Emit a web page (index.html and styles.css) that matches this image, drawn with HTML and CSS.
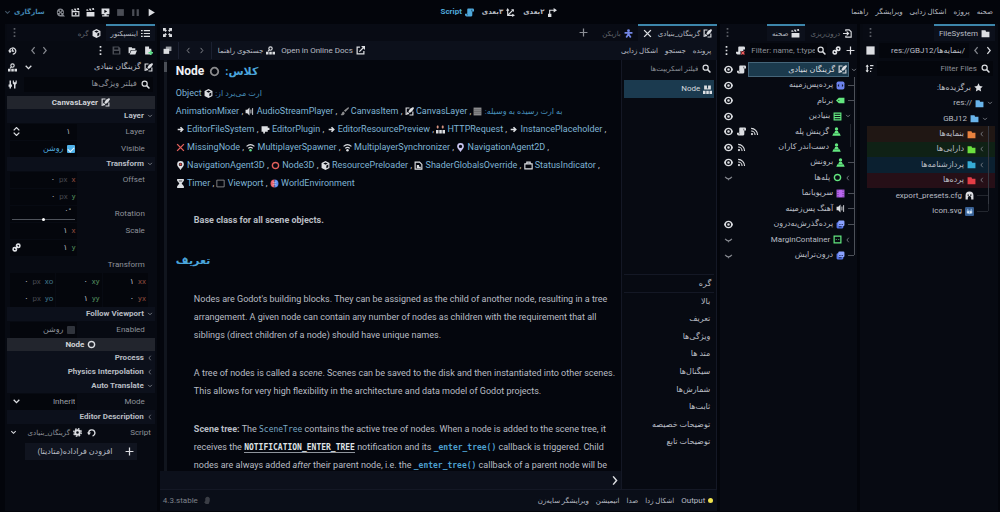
FILE: index.html
```html
<!DOCTYPE html>
<html lang="fa" dir="rtl">
<head>
<meta charset="utf-8">
<title>Script Editor</title>
<link rel="stylesheet" href="styles.css">
</head>
<body>
<svg class="sprite" aria-hidden="true">
  <symbol id="canvas" viewBox="0 0 16 16"><path d="M8 1.8H2v12.4M8 14.2h6V8" fill="none" stroke="currentColor" stroke-width="2"/><path d="M14.5 0 9 3 6 8l2.500 2.500L13 7l3-5zM5 9c-2 .5-1.500 3-3 4 2.500 1 5 .5 5.500-2z" fill="currentColor"/></symbol>
  <symbol id="script" viewBox="0 0 16 16"><path d="M5 1h8a2.500 2.500 0 0 1 3 2.500V6h-3v7a2 2 0 0 1-2 2H3a3 3 0 0 1-3-3v-2h4V3a2 2 0 0 1 1-2z" fill="currentColor"/><path d="M12 3v3M4 11v2" stroke="#060911" stroke-width="1"/></symbol>
  <symbol id="axis3" viewBox="0 0 16 16"><path d="M3 3v10h10M3 13 12 4" fill="none" stroke="currentColor" stroke-width="2"/><path d="M0 5l3-5 3 5zM11 10l5 3-5 3zM9 2h5v5z" fill="currentColor"/></symbol>
  <symbol id="axis2" viewBox="0 0 16 16"><path d="M3 13V4h10" fill="none" stroke="currentColor" stroke-width="2"/><path d="M10 0l6 4-6 4zM0 10h6v6H0z" fill="currentColor"/></symbol>
  <symbol id="chev-down" viewBox="0 0 16 16"><path d="m3 5 5 5 5-5" fill="none" stroke="currentColor" stroke-width="2.400"/></symbol>
  <symbol id="chev-left" viewBox="0 0 16 16"><path d="m10 2-5 6 5 6" fill="none" stroke="currentColor" stroke-width="2.200"/></symbol>
  <symbol id="chev-right" viewBox="0 0 16 16"><path d="m6 2 5 6-5 6" fill="none" stroke="currentColor" stroke-width="2.200"/></symbol>
  <symbol id="movie" viewBox="0 0 16 16"><path fill-rule="evenodd" d="M8 1a6.500 6.500 0 0 1 5 10.500l3 3.500H9A7 7 0 1 1 8 1zm0 2a1.500 1.500 0 1 0 0 3 1.500 1.500 0 0 0 0-3zM4.500 6a1.500 1.500 0 1 0 0 3 1.500 1.500 0 0 0 0-3zm7 0a1.500 1.500 0 1 0 0 3 1.500 1.500 0 0 0 0-3zM8 9.500a1.500 1.500 0 1 0 0 3 1.500 1.500 0 0 0 0-3z" fill="currentColor"/></symbol>
  <symbol id="clap-open" viewBox="0 0 16 16"><path d="M2 6.500V14h12V6.500z" fill="none" stroke="currentColor" stroke-width="2"/><path d="m0 3 3-1 2 3H1zM5 1.500 8 1l2 3.500L7 5zM10 .8l4-.8.700 3-2.700.500zM7 8l4 2.500L7 13z" fill="currentColor"/></symbol>
  <symbol id="clap" viewBox="0 0 16 16"><path d="M1 7h14v8H1zM0 3l3-1 2 3H1zM5 1.500 8 1l2 3.500L7 5zM10 .8l4-.8.700 3-2.700.500z" fill="currentColor"/></symbol>
  <symbol id="remote" viewBox="0 0 16 16"><path fill-rule="evenodd" d="M1 1h14v10h-5v2h4v2H2v-2h4v-2H1zm5 2v6l5-3z" fill="currentColor"/></symbol>
  <symbol id="stop" viewBox="0 0 16 16"><path d="M2 2h12v12H2z" fill="currentColor"/></symbol>
  <symbol id="pause" viewBox="0 0 16 16"><path d="M2 2h4v12H2zM10 2h4v12h-4z" fill="currentColor"/></symbol>
  <symbol id="play" viewBox="0 0 16 16"><path d="M3 1.500v13L14 8z" fill="currentColor"/></symbol>
  <symbol id="folder" viewBox="0 0 16 16"><path d="M1 2h7l1 3h6v9.500H1z" fill="currentColor"/></symbol>
  <symbol id="dots" viewBox="0 0 16 16"><path d="M6.500 0h3v3h-3zM6.500 6.500h3v3h-3zM6.500 13h3v3h-3z" fill="currentColor"/></symbol>
  <symbol id="search" viewBox="0 0 16 16"><circle cx="6.500" cy="6.500" r="4.500" fill="none" stroke="currentColor" stroke-width="2.200"/><path d="m10 10 5 5" stroke="currentColor" stroke-width="2.600"/></symbol>
  <symbol id="sort" viewBox="0 0 16 16"><path d="M4 2v12M9 3h6M9 8h4M9 13h2" stroke="currentColor" stroke-width="2.200"/><path d="M1 5l3-4 3 4zM1 11l3 4 3-4z" fill="currentColor"/></symbol>
  <symbol id="star" viewBox="0 0 16 16"><path d="m8 .5 2.300 4.900 5.200.700-3.800 3.700 1 5.400L8 12.500l-4.700 2.700 1-5.400L.5 6.100l5.200-.7z" fill="currentColor"/></symbol>
  <symbol id="home" viewBox="0 0 16 16"><path fill-rule="evenodd" d="M8 1a7 7 0 0 1 7 7v7h-4v-3a3 3 0 0 0-6 0v3H1V8a7 7 0 0 1 7-7zM4.500 6v2.500H7V6zM9 6v2.500h2.500V6z" fill="currentColor"/></symbol>
  <symbol id="godot" viewBox="0 0 16 16"><rect width="16" height="16" rx="2" fill="#375f93"/><path d="M3 6h10v5q-5 4-10 0zM4 3h2v3H4zM10 3h2v3h-2z" fill="#8fb6df"/><circle cx="5.500" cy="9" r="1.500" fill="#fff"/><circle cx="10.500" cy="9" r="1.500" fill="#fff"/></symbol>
  <symbol id="import" viewBox="0 0 16 16"><path d="M5 4V1.500h6L14.500 5v9.500H5V12M0 8h9M6.500 4.500 10 8l-3.500 3.500" fill="none" stroke="currentColor" stroke-width="2"/></symbol>
  <symbol id="plus" viewBox="0 0 16 16"><path d="M8 1v14M1 8h14" stroke="currentColor" stroke-width="2.200"/></symbol>
  <symbol id="link" viewBox="0 0 16 16"><g fill="none" stroke="currentColor" stroke-width="2.800"><rect x="8" y="2" width="6" height="6" rx="2.500"/><rect x="2" y="8" width="6" height="6" rx="2.500"/><path d="m5.500 10.500 5-5"/></g></symbol>
  <symbol id="script-x" viewBox="0 0 16 16"><path d="M5 1h8a2.500 2.500 0 0 1 3 2.500V6h-3v3H8v6H3a3 3 0 0 1-3-3v-2h4V3a2 2 0 0 1 1-2z" fill="currentColor"/><path d="m9.500 9.500 5.500 5.500m0-5.500L9.500 15" stroke="#f25c5c" stroke-width="2.200"/></symbol>
  <symbol id="eye" viewBox="0 0 16 16"><path fill-rule="evenodd" d="M8 1.500c4 0 7 2.500 8 6.500-1 4-4 6.500-8 6.500S1 12 0 8c1-4 4-6.500 8-6.500zm0 2a4.500 4.500 0 1 0 0 9 4.500 4.500 0 0 0 0-9z" fill="currentColor"/><circle cx="8" cy="8" r="2.200" fill="currentColor"/></symbol>
  <symbol id="shut" viewBox="0 0 16 16"><path d="M2 7q6 7 12 0M8 10v3" fill="none" stroke="currentColor" stroke-width="2.200"/></symbol>
  <symbol id="signal" viewBox="0 0 16 16"><circle cx="3.500" cy="12.500" r="2" fill="currentColor"/><path d="M2 2.500A11.500 11.500 0 0 1 13.500 14M2 7a7 7 0 0 1 7 7" fill="none" stroke="currentColor" stroke-width="2"/></symbol>
  <symbol id="parallax" viewBox="0 0 16 16"><rect x="1" y="1" width="14" height="14" rx="3" fill="#6d83ee"/><path d="M5.500 5 3 8l2.500 3M10.500 5 13 8l-2.500 3" fill="#161b33"/></symbol>
  <symbol id="player" viewBox="0 0 16 16"><rect x="1" y="4" width="12" height="11" rx="2" fill="#5876e8"/><rect x="4" y="1" width="11" height="10" rx="2" fill="#8ba2ff"/><path d="M6 8h2m2 0h2M5 12h5" stroke="#1c2550" stroke-width="1.800"/></symbol>
  <symbol id="tag" viewBox="0 0 16 16"><path d="M5 3h10v10H5L0 8z" fill="currentColor"/><circle cx="5" cy="8" r="1" fill="#0a2a12"/></symbol>
  <symbol id="vbox" viewBox="0 0 16 16"><path d="M2 2h12v12H2zM2 6h12M2 10h12" fill="none" stroke="currentColor" stroke-width="2"/></symbol>
  <symbol id="pawn" viewBox="0 0 16 16"><circle cx="8" cy="3.500" r="3" fill="currentColor"/><path d="M5.500 7h5l1.500 3.500H4zM2.500 11h11l2 4.500H.5z" fill="currentColor"/></symbol>
  <symbol id="ring" viewBox="0 0 16 16"><circle cx="8" cy="8" r="5.500" fill="none" stroke="currentColor" stroke-width="2.600"/></symbol>
  <symbol id="film" viewBox="0 0 16 16"><path d="M1 1h14v14H1z" fill="currentColor"/><path d="M3.500 1v14M12.500 1v14" stroke="#3a1650" stroke-width="1.200" stroke-dasharray="2 2"/></symbol>
  <symbol id="speaker" viewBox="0 0 16 16"><path d="M8 1v14l-4-4H1V5h3z" fill="currentColor"/><path d="M10.500 4.500v7M13.500 2v12" stroke="currentColor" stroke-width="1.600"/></symbol>
  <symbol id="margin" viewBox="0 0 16 16"><path d="M2 2h12v12H2z" fill="none" stroke="currentColor" stroke-width="2.200"/><path d="M5 8h1.500m3 0H11" stroke="currentColor" stroke-width="1.600"/></symbol>
  <symbol id="body" viewBox="0 0 16 16"><circle cx="8" cy="3" r="2.500" fill="currentColor"/><path d="M1 7h14M8 6v4m0-1-4 6m4-6 4 6" fill="none" stroke="currentColor" stroke-width="3"/></symbol>
  <symbol id="close" viewBox="0 0 16 16"><path d="m2 2 12 12M14 2 2 14" stroke="currentColor" stroke-width="2.400"/></symbol>
  <symbol id="docs" viewBox="0 0 16 16"><circle cx="8" cy="4.500" r="3" fill="none" stroke="currentColor" stroke-width="2"/><path d="M6 7 3.500 9.500" stroke="currentColor" stroke-width="2"/><path d="M0 10h4.500v5H0zM5.800 10h4.500v5H5.800zM11.500 10H16v5h-4.500z" fill="currentColor"/></symbol>
  <symbol id="classdoc" viewBox="0 0 16 16"><path d="M2 1h5v5h2V1h5v7H2zM0 10h4.500v6H0zM5.800 10h4.500v6H5.800zM11.500 10H16v6h-4.500z" fill="currentColor"/></symbol>
  <symbol id="external" viewBox="0 0 16 16"><path d="M7 2H2v12h12V9M6 10l7-7" fill="none" stroke="currentColor" stroke-width="2.200"/><path d="M9 0h7v7z" fill="currentColor"/></symbol>
  <symbol id="windows" viewBox="0 0 16 16"><path d="M5 1h10v8H5z" fill="#9a9da3"/><path d="M1 5h10v9H1z" fill="currentColor"/></symbol>
  <symbol id="expand" viewBox="0 0 16 16"><path d="M0 0h6L4.300 1.700 7 4.500 4.500 7 1.700 4.300 0 6zM16 0v6l-1.700-1.700L11.500 7 9 4.500l2.700-2.800L10 0zM0 16v-6l1.700 1.700L4.500 9 7 11.500l-2.700 2.800L6 16zM16 16h-6l1.700-1.700L9 11.500 11.500 9l2.800 2.700L16 10z" fill="currentColor"/></symbol>
  <symbol id="cube" viewBox="0 0 16 16"><path fill-rule="evenodd" d="m8 0 7 3.500v9L8 16l-7-3.500v-9zm0 2.500L4 4.500l4 2 4-2zM9.500 8v5l3.500-2V6z" fill="currentColor"/></symbol>
  <symbol id="list" viewBox="0 0 16 16"><path d="M0 3h3M0 8h3M0 13h3M5 3h11M5 8h11M5 13h11" stroke="currentColor" stroke-width="2.200"/></symbol>
  <symbol id="history" viewBox="0 0 16 16"><path d="M3 10a5.500 5.500 0 1 1 5.500 4.500M8 5v4h3" fill="none" stroke="currentColor" stroke-width="2.200"/><path d="M0 8h7l-3.500 5z" fill="currentColor"/></symbol>
  <symbol id="revert" viewBox="0 0 16 16"><path d="M3 9a5.500 5.500 0 1 1 7 5.200" fill="none" stroke="currentColor" stroke-width="2.400"/><path d="M0 8h7l-3.500 5z" fill="currentColor"/></symbol>
  <symbol id="save" viewBox="0 0 16 16"><path fill-rule="evenodd" d="M1 1h11l3 3v11H1zm3 1.500V6h7V2.500zM3.500 9v4.500h9V9z" fill="currentColor"/></symbol>
  <symbol id="load" viewBox="0 0 16 16"><path d="M1 2h6v2h6v3H5l-2 6H1zM6 8h10l-3 7H3z" fill="currentColor"/></symbol>
  <symbol id="newfile" viewBox="0 0 16 16"><path d="M2 1h7v4h4v10H2z" fill="currentColor"/><path d="M12 8v8M8 12h8" stroke="#5fe08a" stroke-width="2.600"/></symbol>
  <symbol id="tools" viewBox="0 0 16 16"><path d="M4 1v14M12 6v9" stroke="currentColor" stroke-width="2.600"/><path d="M1 8h6v4H1zM8.500 1h2v3h3V1h2v5l-2 2h-3l-2-2z" fill="currentColor"/></symbol>
  <symbol id="spin" viewBox="0 0 16 16"><path d="m3 6 5-5 5 5M3 10l5 5 5-5" fill="none" stroke="currentColor" stroke-width="2.200"/></symbol>
  <symbol id="gear" viewBox="0 0 16 16"><circle cx="8" cy="8" r="4" fill="none" stroke="currentColor" stroke-width="3.400"/><circle cx="8" cy="8" r="6.700" fill="none" stroke="currentColor" stroke-width="2.400" stroke-dasharray="2.900 2.360"/></symbol>
  <symbol id="brush" viewBox="0 0 16 16"><path d="M15 0 7 6l2.500 3L16 2zM6 8c-3 1-2 4-5 6 3 1.500 7 .5 7.500-3.500z" fill="currentColor"/></symbol>
  <symbol id="notify" viewBox="0 0 16 16"><path d="M4 4q4-5 8 0v5l-2 5H5l-3-3 2-2z" fill="currentColor"/></symbol>
  <symbol id="arrow" viewBox="0 0 16 16"><path d="M3 8h8M8 4l4 4-4 4" fill="none" stroke="currentColor" stroke-width="2.800"/></symbol>
  <symbol id="plugin" viewBox="0 0 16 16"><path d="M1 2h11v3h3v4h-3v3H7v3H4v-3H1z" fill="currentColor"/></symbol>
  <symbol id="http" viewBox="0 0 16 16"><path d="M3 1v5M1 3.500h4M12 1v5M10 3.500h4" stroke="#e8a08a" stroke-width="2"/><path d="M0 9h4.500v6H0zM5.800 9h4.500v6H5.800zM11.500 9H16v6h-4.500z" fill="currentColor"/></symbol>
  <symbol id="wifi" viewBox="0 0 16 16"><path d="M1 6q7-6 14 0M4 9.500q4-3.500 8 0" fill="none" stroke="currentColor" stroke-width="2.200"/><circle cx="8" cy="13" r="2.200" fill="var(--dot, currentColor)"/></symbol>
  <symbol id="pin" viewBox="0 0 16 16"><path fill-rule="evenodd" d="M8 0a6 6 0 0 1 6 6c0 3-3 5-6 10C5 11 2 9 2 6a6 6 0 0 1 6-6zm0 3a3 3 0 1 0 0 6 3 3 0 0 0 0-6z" fill="currentColor"/><circle cx="8" cy="6" r="2" fill="var(--dot, none)"/></symbol>
  <symbol id="shader" viewBox="0 0 16 16"><path d="M2 2h8l4 4v8.500H2z" fill="none" stroke="currentColor" stroke-width="2"/><path d="M5 7h4v3h3v3H5z" fill="currentColor"/></symbol>
  <symbol id="status" viewBox="0 0 16 16"><path d="M1.500 5h13v9h-13zM5 4V2h6v2" fill="none" stroke="currentColor" stroke-width="2"/></symbol>
  <symbol id="timer" viewBox="0 0 16 16"><path d="M2 0h12v3l-4 5 4 5v3H2v-3l4-5-4-5z" fill="currentColor"/><path d="M5 3.500h6" stroke="#060911" stroke-width="1.200"/></symbol>
  <symbol id="frame" viewBox="0 0 16 16"><path d="M1.500 2h13v12h-13z" fill="none" stroke="currentColor" stroke-width="1.600"/></symbol>
  <symbol id="world" viewBox="0 0 16 16"><path d="M8 1a7 7 0 0 0 0 14z" fill="#e8606a"/><path d="M8 1a7 7 0 0 1 0 14z" fill="#5a8cf0"/><path d="M4 5q4 3 8 0M4 11q4-3 8 0" fill="none" stroke="#e8ddea" stroke-width="1"/></symbol>
  <symbol id="grid" viewBox="0 0 16 16"><path d="M1 1h14v14H1z" fill="currentColor"/><path d="M1 5h14M1 8h14M1 11h14" stroke="#444" stroke-width="0.800"/></symbol>
</svg>

<header class="menubar">
  <nav class="menus">
    <button>صحنه</button><button>پروژه</button><button>اشکال زدایی</button><button>ویرایشگر</button><button>راهنما</button>
  </nav>
  <nav class="screens">
    <button><svg class="ic"><use href="#axis2"/></svg>۲بعدی</button>
    <button><svg class="ic"><use href="#axis3"/></svg>۳بعدی</button>
    <button class="on"><svg class="ic"><use href="#script"/></svg>Script</button>
  </nav>
  <div class="run">
    <button aria-label="Play"><svg class="ic"><use href="#play"/></svg></button>
    <button aria-label="Pause" class="off"><svg class="ic"><use href="#pause"/></svg></button>
    <button aria-label="Stop" class="off"><svg class="ic"><use href="#stop"/></svg></button>
    <button aria-label="Remote"><svg class="ic"><use href="#remote"/></svg></button>
    <button aria-label="Play scene"><svg class="ic"><use href="#clap"/></svg></button>
    <button aria-label="Play custom scene"><svg class="ic"><use href="#clap-open"/></svg></button>
    <button aria-label="Movie mode" class="half"><svg class="ic"><use href="#movie"/></svg></button>
    <button class="renderer">سازگاری<svg class="ic sm"><use href="#chev-down"/></svg></button>
  </div>
</header>

<main class="workspace">
  <section class="dock files">
    <div class="tabs"><button class="tab on latin"><svg class="ic"><use href="#folder"/></svg>FileSystem</button><button class="more" aria-label="Menu"><svg class="ic"><use href="#dots"/></svg></button></div>
    <div class="bar">
      <button aria-label="Forward"><svg class="ic"><use href="#chev-right"/></svg></button>
      <button aria-label="Back" class="half"><svg class="ic"><use href="#chev-left"/></svg></button>
      <input class="path" dir="ltr" aria-label="Path" value="res://GBJ12/بنمایه‌ها/">
      <button aria-label="Split mode"><svg class="ic lg"><use href="#stop"/></svg></button>
    </div>
    <div class="bar slim">
      <label class="field"><svg class="ic"><use href="#search"/></svg><input placeholder="Filter Files" aria-label="Filter Files"></label>
      <button aria-label="Sort"><svg class="ic"><use href="#sort"/></svg></button>
    </div>
    <ul class="tree filetree">
      <li class="row"><i class="pad"></i><i class="pad"></i><svg class="ic"><use href="#star"/></svg><span>برگزیده‌ها:</span></li>
      <li class="row"><svg class="ic tiny"><use href="#chev-down"/></svg><svg class="ic blue"><use href="#folder"/></svg><span dir="ltr">res://</span></li>
      <li class="row"><i class="pad"></i><svg class="ic tiny"><use href="#chev-down"/></svg><svg class="ic blue"><use href="#folder"/></svg><span>GBJ12</span></li>
      <li class="row tint orange"><i class="rail pass"></i><svg class="ic tiny"><use href="#chev-left"/></svg><svg class="ic"><use href="#folder"/></svg><span>بنمایه‌ها</span></li>
      <li class="row tint green"><i class="rail pass"></i><svg class="ic tiny"><use href="#chev-left"/></svg><svg class="ic"><use href="#folder"/></svg><span>دارایی‌ها</span></li>
      <li class="row tint cyan"><i class="rail pass"></i><svg class="ic tiny"><use href="#chev-left"/></svg><svg class="ic"><use href="#folder"/></svg><span>پردازشنامه‌ها</span></li>
      <li class="row tint red"><i class="rail pass"></i><svg class="ic tiny"><use href="#chev-left"/></svg><svg class="ic"><use href="#folder"/></svg><span>پرده‌ها</span></li>
      <li class="row"><i class="rail wide"></i><svg class="ic"><use href="#home"/></svg><span>export_presets.cfg</span></li>
      <li class="row"><i class="rail wide last"></i><svg class="ic"><use href="#godot"/></svg><span>icon.svg</span></li>
    </ul>
  </section>

  <section class="dock scene">
    <div class="tabs"><button class="tab"><svg class="ic"><use href="#import"/></svg>درون‌ریزی</button><button class="tab on"><svg class="ic"><use href="#clap"/></svg>صحنه</button><button class="more" aria-label="Menu"><svg class="ic"><use href="#dots"/></svg></button></div>
    <div class="bar">
      <button aria-label="Add node"><svg class="ic"><use href="#plus"/></svg></button>
      <button aria-label="Instance scene"><svg class="ic"><use href="#link"/></svg></button>
      <label class="field"><svg class="ic"><use href="#search"/></svg><input dir="ltr" placeholder="Filter: name, t:type" aria-label="Filter nodes"></label>
      <button aria-label="Detach script"><svg class="ic"><use href="#script-x"/></svg></button>
      <button aria-label="More"><svg class="ic"><use href="#dots"/></svg></button>
    </div>
    <ul class="tree scenetree">
      <li class="row"><svg class="ic tiny"><use href="#chev-down"/></svg><div class="picked"><svg class="ic"><use href="#canvas"/></svg><span>گزینگان بنیادی</span></div><div class="flags"><svg class="ic"><use href="#script"/></svg><svg class="ic"><use href="#eye"/></svg></div></li>
      <li class="row"><i class="rail"></i><svg class="ic"><use href="#parallax"/></svg><span>پرده‌پس‌زمینه</span><div class="flags"><svg class="ic"><use href="#eye"/></svg></div></li>
      <li class="row"><i class="rail"></i><svg class="ic lime"><use href="#tag"/></svg><span>برنام</span><div class="flags"><svg class="ic"><use href="#eye"/></svg></div></li>
      <li class="row"><i class="rail pass"></i><svg class="ic tiny"><use href="#chev-down"/></svg><svg class="ic lime"><use href="#vbox"/></svg><span>بنیادین</span><div class="flags"><svg class="ic"><use href="#eye"/></svg></div></li>
      <li class="row"><i class="rail pass"></i><i class="rail dim"></i><svg class="ic lime"><use href="#pawn"/></svg><span>گزینش پله</span><div class="flags"><svg class="ic"><use href="#signal"/></svg><svg class="ic"><use href="#script"/></svg><svg class="ic"><use href="#eye"/></svg></div></li>
      <li class="row"><i class="rail pass"></i><i class="rail dim last"></i><svg class="ic lime"><use href="#pawn"/></svg><span>دست‌اندر کاران</span><div class="flags"><svg class="ic"><use href="#signal"/></svg><svg class="ic"><use href="#eye"/></svg></div></li>
      <li class="row"><i class="rail"></i><svg class="ic lime"><use href="#pawn"/></svg><span>برونش</span><div class="flags"><svg class="ic"><use href="#signal"/></svg><svg class="ic"><use href="#eye"/></svg></div></li>
      <li class="row"><i class="rail pass"></i><svg class="ic tiny"><use href="#chev-left"/></svg><svg class="ic lime"><use href="#ring"/></svg><span>پله‌ها</span><div class="flags"><svg class="ic half"><use href="#shut"/></svg></div></li>
      <li class="row"><i class="rail"></i><svg class="ic purple"><use href="#film"/></svg><span>سرپویانما</span></li>
      <li class="row"><i class="rail"></i><svg class="ic"><use href="#speaker"/></svg><span>آهنگ پس‌زمینه</span></li>
      <li class="row"><i class="rail"></i><svg class="ic"><use href="#player"/></svg><span>پرده‌گذرش‌به‌درون</span><div class="flags"><svg class="ic"><use href="#eye"/></svg></div></li>
      <li class="row"><i class="rail pass"></i><svg class="ic tiny"><use href="#chev-left"/></svg><svg class="ic lime"><use href="#margin"/></svg><span>MarginContainer</span><div class="flags"><svg class="ic half"><use href="#shut"/></svg></div></li>
      <li class="row"><i class="rail last"></i><svg class="ic"><use href="#player"/></svg><span>درون‌ترایش</span><div class="flags"><svg class="ic half"><use href="#shut"/></svg></div></li>
    </ul>
  </section>

  <section class="editor">
    <div class="tabs">
      <button class="tab on"><svg class="ic"><use href="#canvas"/></svg>گزینگان_بنیادی<svg class="ic shut"><use href="#close"/></svg></button>
      <button class="tab"><svg class="ic body"><use href="#body"/></svg>بازیکن</button>
      <button class="add" aria-label="New tab"><svg class="ic"><use href="#plus"/></svg></button>
      <button class="more" aria-label="Distraction free"><svg class="ic"><use href="#expand"/></svg></button>
    </div>
    <div class="toolbar">
      <button>پرونده</button><button>جستجو</button><button>اشکال زدایی</button>
      <div class="tools">
        <button class="latin"><svg class="ic"><use href="#external"/></svg>Open in Online Docs</button>
        <button><svg class="ic"><use href="#docs"/></svg>جستجوی راهنما</button>
        <i class="sep"></i>
        <button aria-label="Next" class="half"><svg class="ic sm"><use href="#chev-right"/></svg></button>
        <button aria-label="Previous" class="half"><svg class="ic sm"><use href="#chev-left"/></svg></button>
        <i class="sep"></i>
        <button aria-label="Float window"><svg class="ic"><use href="#windows"/></svg></button>
      </div>
    </div>
    <div class="split">
      <aside class="scripts">
        <label class="field"><svg class="ic"><use href="#search"/></svg><input placeholder="فیلتر اسکریپت‌ها" aria-label="فیلتر اسکریپت‌ها"></label>
        <div class="openfiles"><button class="openfile"><svg class="ic"><use href="#classdoc"/></svg>Node</button></div>
        <h3 class="outline-title">گره</h3>
        <ul class="outline">
          <li>بالا</li><li>تعریف</li><li>ویژگی‌ها</li><li>متد ها</li><li>سیگنال‌ها</li><li>شمارش‌ها</li><li>ثابت‌ها</li><li>توضیحات خصیصه</li><li>توضیحات تابع</li>
        </ul>
      </aside>
      <div class="page">
        <article class="doc" dir="ltr">
          <div class="scroll"><i></i></div>
          <h1>Node <svg class="ic lg grey"><use href="#ring"/></svg> <bdi>کلاس:</bdi></h1>
          <p class="from"><a href="#o">Object</a> <svg class="ic"><use href="#cube"/></svg> <bdi>ارث می‌برد از:</bdi></p>
          <div class="heirs">
            <p><a href="#a">AnimationMixer</a> , <svg class="ic"><use href="#speaker"/></svg> <a href="#a">AudioStreamPlayer</a> , <svg class="ic grey"><use href="#brush"/></svg> <a href="#a">CanvasItem</a> , <svg class="ic"><use href="#canvas"/></svg> <a href="#a">CanvasLayer</a> , <svg class="ic grey"><use href="#grid"/></svg> <bdi>به ارث رسیده به وسیله:</bdi></p>
            <p><svg class="ic"><use href="#arrow"/></svg> <a href="#a">EditorFileSystem</a> , <svg class="ic"><use href="#plugin"/></svg> <a href="#a">EditorPlugin</a> , <svg class="ic"><use href="#arrow"/></svg> <a href="#a">EditorResourcePreview</a> , <svg class="ic"><use href="#http"/></svg> <a href="#a">HTTPRequest</a> , <svg class="ic"><use href="#arrow"/></svg> <a href="#a">InstancePlaceholder</a> ,</p>
            <p><svg class="ic rose"><use href="#close"/></svg> <a href="#a">MissingNode</a> , <svg class="ic greendot"><use href="#wifi"/></svg> <a href="#a">MultiplayerSpawner</a> , <svg class="ic"><use href="#wifi"/></svg> <a href="#a">MultiplayerSynchronizer</a> , <svg class="ic violet"><use href="#pin"/></svg> <a href="#a">NavigationAgent2D</a> ,</p>
            <p><svg class="ic reddot"><use href="#pin"/></svg> <a href="#a">NavigationAgent3D</a> , <svg class="ic rose"><use href="#ring"/></svg> <a href="#a">Node3D</a> , <svg class="ic"><use href="#cube"/></svg> <a href="#a">ResourcePreloader</a> , <svg class="ic"><use href="#shader"/></svg> <a href="#a">ShaderGlobalsOverride</a> , <svg class="ic"><use href="#status"/></svg> <a href="#a">StatusIndicator</a> ,</p>
            <p><svg class="ic"><use href="#timer"/></svg> <a href="#a">Timer</a> , <svg class="ic grey"><use href="#frame"/></svg> <a href="#a">Viewport</a> , <svg class="ic"><use href="#world"/></svg> <a href="#a">WorldEnvironment</a></p>
          </div>
          <p class="brief">Base class for all scene objects.</p>
          <h2><bdi>تعریف</bdi></h2>
          <div class="prose">
            <p>Nodes are Godot's building blocks. They can be assigned as the child of another node, resulting in a tree<br>arrangement. A given node can contain any number of nodes as children with the requirement that all<br>siblings (direct children of a node) should have unique names.</p>
            <p>A tree of nodes is called a <em>scene</em>. Scenes can be saved to the disk and then instantiated into other scenes.<br>This allows for very high flexibility in the architecture and data model of Godot projects.</p>
            <p><b>Scene tree:</b> The <code>SceneTree</code> contains the active tree of nodes. When a node is added to the scene tree, it<br>receives the <code class="const">NOTIFICATION_ENTER_TREE</code> notification and its <code class="fn">_enter_tree()</code> callback is triggered. Child<br>nodes are always added <em>after</em> their parent node, i.e. the <code class="fn">_enter_tree()</code> callback of a parent node will be</p>
          </div>
        </article>
        <div class="strip"><button aria-label="Toggle list"><svg class="ic lg"><use href="#chev-right"/></svg></button></div>
      </div>
    </div>
    <footer class="bottom">
      <button class="latin"><i class="dot"></i>Output</button><button>اشکال زدا</button><button>صدا</button><button>انیمیشن</button><button>ویرایشگر سایه‌زن</button>
      <div class="version latin"><svg class="ic"><use href="#notify"/></svg><span dir="ltr">4.3.stable</span></div>
    </footer>
  </section>

  <section class="dock inspector">
    <div class="tabs"><button class="tab on"><svg class="ic"><use href="#list"/></svg>اینسپکتور</button><button class="tab"><svg class="ic"><use href="#cube"/></svg>گره</button><button class="more" aria-label="Menu"><svg class="ic"><use href="#dots"/></svg></button></div>
    <div class="bar">
      <button aria-label="New resource"><svg class="ic"><use href="#newfile"/></svg></button>
      <button aria-label="Load resource"><svg class="ic"><use href="#load"/></svg></button>
      <button aria-label="Save resource" class="off"><svg class="ic"><use href="#save"/></svg></button>
      <button aria-label="Options"><svg class="ic"><use href="#dots"/></svg></button>
      <div class="nav">
        <button aria-label="Next" class="half"><svg class="ic"><use href="#chev-right"/></svg></button>
        <button aria-label="Previous" class="half"><svg class="ic"><use href="#chev-left"/></svg></button>
      </div>
      <button aria-label="History"><svg class="ic"><use href="#history"/></svg></button>
    </div>
    <div class="bar object">
      <button class="name"><svg class="ic"><use href="#canvas"/></svg>گزینگان بنیادی<svg class="ic end"><use href="#chev-down"/></svg></button>
      <button aria-label="Open documentation"><svg class="ic"><use href="#docs"/></svg></button>
    </div>
    <div class="bar">
      <label class="field"><svg class="ic"><use href="#search"/></svg><input placeholder="فیلتر ویژگی‌ها" aria-label="فیلتر ویژگی‌ها"></label>
      <button aria-label="Property tools"><svg class="ic"><use href="#tools"/></svg></button>
    </div>
    <div class="props">
      <h3 class="category"><svg class="ic"><use href="#canvas"/></svg>CanvasLayer</h3>
      <button class="group"><svg class="ic tiny"><use href="#chev-down"/></svg>Layer</button>
      <div class="prop"><label for="layer">Layer</label><div class="value"><input id="layer" class="num" value="۱"><svg class="ic"><use href="#spin"/></svg></div></div>
      <div class="prop"><span>Visible</span><label class="value check lit"><input type="checkbox" checked>روشن</label></div>
      <button class="group"><svg class="ic tiny"><use href="#chev-down"/></svg>Transform</button>
      <div class="prop"><span>Offset</span><label class="value"><b class="x">x</b><i>px</i><input value="۰"></label></div>
      <div class="prop"><span></span><label class="value"><b class="y">y</b><i>px</i><input value="۰"></label></div>
      <div class="prop"><label for="rot">Rotation</label><div class="value angle"><input id="rot" value="۰°"><input type="range" aria-label="Rotation slider" value="50"></div></div>
      <div class="prop"><span>Scale</span><label class="value"><b class="x">x</b><input value="۱"></label></div>
      <div class="prop"><span></span><label class="value"><b class="y">y</b><input value="۱"><svg class="ic"><use href="#link"/></svg></label></div>
      <div class="prop"><span>Transform</span></div>
      <div class="matrix"><label><b class="x">xx</b><input value="۱"></label><label><b class="y">xy</b><input value="۰"></label><label><b class="z">xo</b><i>px</i><input value="۰"></label></div>
      <div class="matrix"><label><b class="x">yx</b><input value="۰"></label><label><b class="y">yy</b><input value="۱"></label><label><b class="z">yo</b><i>px</i><input value="۰"></label></div>
      <button class="group"><svg class="ic tiny"><use href="#chev-down"/></svg>Follow Viewport</button>
      <div class="prop"><span>Enabled</span><label class="value check"><input type="checkbox">روشن</label></div>
      <h3 class="category"><svg class="ic"><use href="#ring"/></svg>Node</h3>
      <button class="group"><svg class="ic tiny"><use href="#chev-left"/></svg>Process</button>
      <button class="group"><svg class="ic tiny"><use href="#chev-left"/></svg>Physics Interpolation</button>
      <button class="group"><svg class="ic tiny"><use href="#chev-down"/></svg>Auto Translate</button>
      <div class="prop"><label for="mode">Mode</label><div class="value"><select id="mode"><option>Inherit</option></select><svg class="ic"><use href="#chev-down"/></svg></div></div>
      <button class="group"><svg class="ic tiny"><use href="#chev-left"/></svg>Editor Description</button>
      <div class="prop script"><span>Script</span><button aria-label="Revert"><svg class="ic"><use href="#revert"/></svg></button><button class="res"><svg class="ic"><use href="#gear"/></svg>گزینگان_بنیادی<svg class="ic sm end"><use href="#chev-down"/></svg></button></div>
      <button class="meta"><svg class="ic"><use href="#plus"/></svg><span>افزودن فراداده(متادیتا)</span></button>
    </div>
  </section>
</main>
</body>
</html>
```
FILE: styles.css
```css
:root {
  --ink: #b9bdc4;
  --panel: #070a12;
  --raised: #0c101b;
  --deep: #04060c;
  --accent: #4fa9dc;
  --line: #141825;
}
* { box-sizing: border-box; }
html, body { height: 100%; }
body {
  margin: 0;
  display: flex;
  flex-direction: column;
  overflow: hidden;
  background: #03050b;
  color: var(--ink);
  font: 8px/12px Roboto, "DejaVu Sans", sans-serif;
}
.sprite { position: absolute; width: 0; height: 0; }
h1, h2, h3, p, ul { margin: 0; padding: 0; }
ul { list-style: none; }
button, input, select { font: inherit; color: inherit; background: none; border: 0; padding: 0; margin: 0; min-width: 0; }
button { display: flex; align-items: center; gap: 3px; white-space: nowrap; }
input::placeholder { color: #8d9199; opacity: 1; }
i { font-style: normal; }
.ic { width: 9px; height: 9px; flex: none; color: #dcdee2; display: block; }
.ic.lg { width: 11px; height: 11px; }
.ic.sm { width: 7px; height: 7px; }
.ic.tiny { width: 6px; height: 6px; color: #80848c; }
.half .ic, .ic.half { color: #85888f; }
.off .ic { color: #4b4e56; }

/* compact chrome text */
.menubar, .tabs, .toolbar, .bottom { font-size: 7px; }
.latin { font-size: 8px; }

/* top bar */
.menubar { display: grid; grid-template-columns: 1fr auto 1fr; align-items: center; height: 24px; padding: 0 7px 0 4px; }
.menus { display: flex; gap: 7px; }
.screens { display: flex; gap: 8px; font-weight: 700; }
.screens .on { font-size: 8px; }
.screens .on, .screens .on .ic { color: var(--accent); }
.run { display: flex; justify-content: flex-end; gap: 6px; }
.run > :first-child { margin-left: 1px; }
.run .renderer { color: #4389b5; font-weight: 700; margin-right: 5px; }
.renderer .ic { color: #44586a; }

.workspace { flex: 1; min-height: 0; display: grid; grid-template-columns: 138fr 137fr 558fr 152fr; gap: 3px; padding: 0 2px 1px 5px; }
.dock, .editor { min-width: 0; min-height: 0; display: flex; flex-direction: column; background: var(--panel); }
.tabs { display: flex; height: 17px; flex: none; background: #080b14; }
.tab { padding: 0 5px; color: #63676f; border-top: 2px solid transparent; }
.tab.on { background: var(--raised); border-top-color: #3d86ab; color: var(--ink); }
.more { margin-right: auto; padding: 0 3px; }
.dock .more .ic { color: #5c5f67; }
.bar { display: flex; align-items: center; gap: 6px; height: 19px; padding: 0 4px; }
.field { flex: 1; min-width: 0; display: flex; align-items: center; gap: 4px; padding: 0 3px; height: 15px; background: var(--deep); }
.field input { flex: 1; width: 0; }
.field input[dir="ltr"] { text-align: right; }
.scene .bar { gap: 5px; padding: 0 2px; }
.scene .field { gap: 2px; padding: 0 1px; }

/* file system */
.files { padding: 0 3px; }
.files .bar { padding: 0 2px; gap: 3px; }
.files .slim { height: 17px; }
.path { flex: 1; width: 0; height: 15px; text-align: right; background: var(--deep); padding: 0 4px; }
.tree { display: grid; grid-auto-rows: 1fr; }
.filetree { height: 139px; margin-top: 3px; }
.scenetree { height: 201px; margin-top: 2px; }
.row { display: flex; align-items: center; gap: 3px; padding: 0 2px; white-space: nowrap; }
.scenetree .row { padding-right: 0; }
.pad { width: 2px; }
.blue { color: #69b4ea; }
.rail { align-self: stretch; width: 7px; margin-right: 2px; border-right: 1px solid #4c5058; background: linear-gradient(#4c5058, #4c5058) center / 100% 1px no-repeat; }
.rail.pass { width: 1px; background: none; }
.rail.dim { margin-right: 0; border-color: #23272f; background: none; }
.rail.wide { width: 12px; border-color: #23272f; background: linear-gradient(#23272f, #23272f) center / 100% 1px no-repeat; }
.filetree .rail { margin-right: 4px; border-color: #343841; }
.rail.last { border-image: linear-gradient(#4c5058 50%, transparent 50%) 1; }
.rail.dim.last, .rail.wide.last { border-image: linear-gradient(#23272f 50%, transparent 50%) 1; }
.tint { margin: 0 0 0 4px; }
.tint.orange { background: #201714; } .orange .ic + .ic { color: #e9833e; }
.tint.green { background: #0f2115; } .green .ic + .ic { color: #6be03f; }
.tint.cyan { background: #0b2030; } .cyan .ic + .ic { color: #36acd6; }
.tint.red { background: #260f17; } .red .ic + .ic { color: #e23d46; }

/* scene tree */
.picked { flex: 1; display: flex; align-items: center; gap: 3px; align-self: stretch; padding: 0 1px; background: #1b3a4d; border: 1px solid #456579; color: #d5d9de; }
.scenetree .row:first-child { gap: 2px; }
.flags { display: flex; gap: 4px; margin-right: auto; padding-left: 2px; }
.picked + .flags { margin-right: 0; }
.lime { color: #63e67f; }
.purple { color: #b966ee; }

/* editor */
.editor .tab .shut { margin-right: 3px; }
.body { color: #7387e6; }
.add { padding: 0 9px; }
.add .ic { color: #8a8d94; }
.toolbar { display: flex; align-items: center; gap: 7px; height: 19px; flex: none; padding: 0 6px 0 3px; background: var(--raised); }
.tools { display: flex; align-items: center; gap: 6px; margin-right: auto; }
.sep { width: 1px; height: 17px; background: #1b2030; }
.split { flex: 1; min-height: 0; display: grid; grid-template-columns: 96fr 462fr; }
.scripts { display: flex; flex-direction: column; min-height: 0; padding: 0 2px 2px; background: var(--panel); border-right: 1px solid var(--line); border-left: 1px solid var(--line); }
.scripts .field { flex: none; height: 17px; background: none; font-size: 7px; }
.openfiles { flex: 1; padding-top: 3px; }
.openfile { width: 100%; height: 18px; padding: 0 2px; background: #1b3a4f; color: #d5d9de; }
.outline-title { font-size: 8px; font-weight: 400; line-height: 17px; padding: 0 3px; border: solid var(--line); border-width: 1px 0; }
.outline { display: grid; grid-auto-rows: 1fr; height: 158px; margin-bottom: 36px; padding: 0 4px; align-items: center; }
.page { display: flex; flex-direction: column; min-width: 0; min-height: 0; }
.doc { position: relative; flex: 1; min-height: 0; overflow: hidden; padding: 2px 0 0 16px; background: #04060d; font-size: 9px; line-height: 18px; white-space: nowrap; }
.scroll { position: absolute; left: 4px; top: 0; bottom: 0; width: 3px; background: #11151e; }
.scroll i { display: block; width: 3px; height: 10px; margin-top: 2px; background: #4a4e56; }
.doc .ic { display: inline-block; vertical-align: -2px; }
.doc a { color: #7fb4d4; text-decoration: none; }
.doc bdi { color: #468fbb; font-size: 8px; line-height: 12px; }
.doc h1 { font-size: 12px; line-height: 18px; color: #f0f2f5; }
.doc h1 .ic { margin: 0 2px; }
.doc h1 bdi, .doc h2 bdi { color: #4aa5dc; font-size: 11px; }
.doc .grey { color: #8b8b8d; }
.from { margin-top: 4px; }
.doc .rose { color: #e2605c; }
.greendot { --dot: #5fe08a; }
.reddot { --dot: #e2504c; }
.violet { color: #c9c4f0; }
.brief { margin: 19px 0 0 18px; font-weight: 700; }
.doc h2 { margin-top: 21px; line-height: 18px; }
.prose { margin: 22px 0 0 18px; }
.prose p + p { margin-top: 20px; }
.prose code { font: 8px/12px "DejaVu Sans Mono", monospace; color: #79a9c6; }
.prose .const { color: #dfe2e6; font-weight: 700; border-bottom: 1px solid #8f949c; }
.prose .fn { color: #4da0d0; font-weight: 700; }
.strip { display: flex; justify-content: flex-end; height: 18px; flex: none; background: var(--raised); direction: ltr; padding-right: 1px; }
.bottom { display: flex; align-items: center; gap: 7px; height: 22px; flex: none; padding: 0 4px 0 3px; background: #0a0e18; border-top: 1px solid var(--line); }
.dot { width: 5px; height: 5px; border-radius: 50%; background: #efe24d; }
.version { display: flex; align-items: center; gap: 5px; margin-right: auto; color: #7d8189; }
.version .ic { color: #3a3d45; }

/* inspector */
.inspector { padding: 0 2px; }
.inspector .bar { height: 18px; gap: 7px; padding: 0 2px 0 1px; }
.inspector .nav { display: flex; gap: 2px; margin-right: auto; margin-left: 5px; }
.inspector .object { height: 16px; }
.name { flex: 1; }
.end { margin-right: auto; }
.props { display: flex; flex-direction: column; margin-top: 3px; }
.category { display: flex; align-items: center; justify-content: center; gap: 3px; height: 13px; font-size: 8px; background: #22252d; color: #d0d3d8; }
.group { height: 14px; padding: 0 2px; background: var(--raised); font-weight: 700; }
.prop { display: grid; grid-template-columns: 1fr 1fr; align-items: center; height: 17px; padding: 0 10px 0 3px; color: #8e929a; }
.value { display: flex; align-items: center; gap: 4px; height: 16px; padding: 0 2px; background: var(--deep); }
.value input:not([type]) { flex: 1; width: 0; color: #b0b4ba; }
.value b, .matrix b { font-weight: 400; }
.value i, .matrix i { color: #44474f; }
.x { color: #8a4a3c; }
.y { color: #4f8a5c; }
.z { color: #3f7388; }
.value .num { padding-right: 5px; }
.check input { appearance: none; display: grid; place-items: center; width: 8px; height: 8px; background: #30343c; border-radius: 1px; }
.check.lit { color: #4fa9dc; }
.check input:checked { background: #4fb2ea; }
.check input:checked::after { content: ""; width: 5px; height: 3px; border: solid #e8f4fb; border-width: 0 0 1px 1px; transform: rotate(-45deg); }
.angle { flex-wrap: wrap; gap: 0; }
.angle input:not([type]) { flex: 1 0 100%; line-height: 10px; padding-right: 4px; }
.angle [type="range"] { appearance: none; width: 100%; height: 3px; background: linear-gradient(#4f535b, #4f535b) center / 100% 1px no-repeat; }
.angle [type="range"]::-webkit-slider-thumb { appearance: none; width: 3px; height: 3px; border-radius: 50%; background: #fff; }
.matrix { display: grid; grid-template-columns: repeat(3, 1fr); gap: 1px; height: 17px; padding: 0 7px 0 3px; }
.matrix label { display: flex; align-items: center; gap: 4px; padding: 0 2px; background: var(--deep); }
.matrix input { flex: 1; width: 0; }
.value select { flex: 1; appearance: none; color: #9ca0a7; }
.script { display: flex; gap: 5px; padding-right: 4px; }
.script > span { flex: 1; }
.res { flex: 0 1 72px; font-size: 7px; }
.meta { align-self: center; width: 112px; height: 17px; margin-top: 2px; padding: 0 3px; background: #10141f; }
.meta span { flex: 1; text-align: center; }
```
